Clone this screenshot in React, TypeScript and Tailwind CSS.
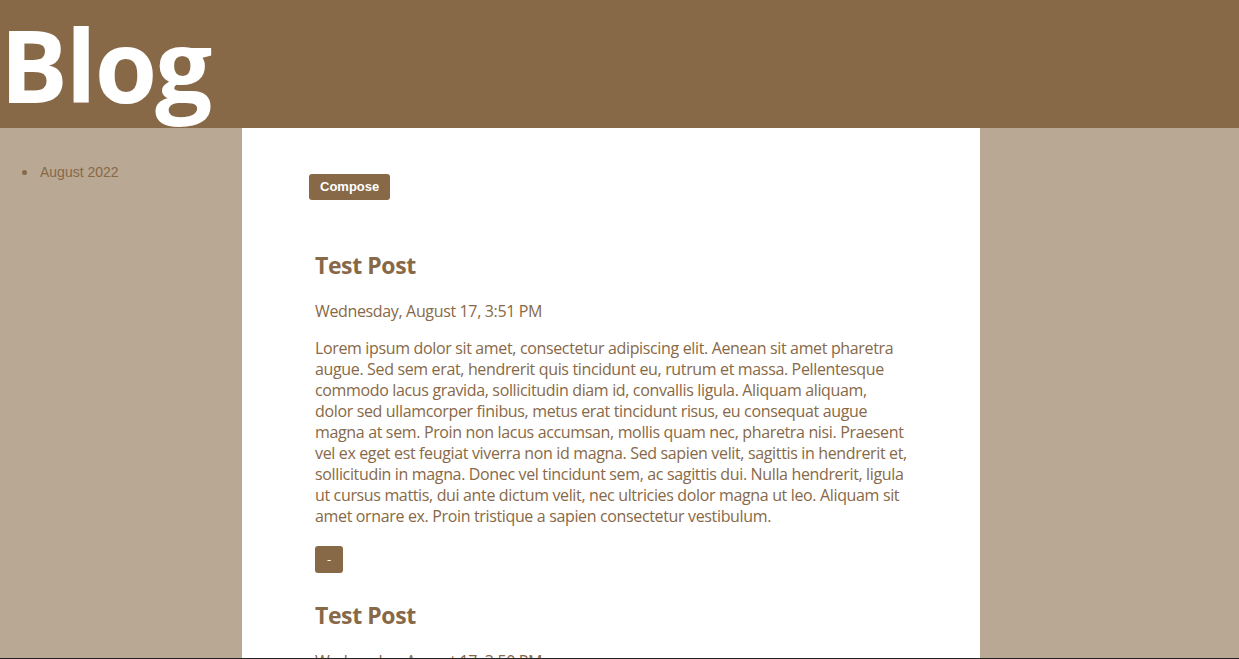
const lorem = [
  'Lorem ipsum dolor sit amet, consectetur adipiscing elit. Aenean sit amet pharetra',
  'augue. Sed sem erat, hendrerit quis tincidunt eu, rutrum et massa. Pellentesque',
  'commodo lacus gravida, sollicitudin diam id, convallis ligula. Aliquam aliquam,',
  'dolor sed ullamcorper finibus, metus erat tincidunt risus, eu consequat augue',
  'magna at sem. Proin non lacus accumsan, mollis quam nec, pharetra nisi. Praesent',
  'vel ex eget est feugiat viverra non id magna. Sed sapien velit, sagittis in hendrerit et,',
  'sollicitudin in magna. Donec vel tincidunt sem, ac sagittis dui. Nulla hendrerit, ligula',
  'ut cursus mattis, dui ante dictum velit, nec ultricies dolor magna ut leo. Aliquam sit',
  'amet ornare ex. Proin tristique a sapien consectetur vestibulum.',
]

const posts = [
  { id: 1, title: 'Test Post', date: 'Wednesday, August 17, 3:51 PM' },
  { id: 2, title: 'Test Post', date: 'Wednesday, August 17, 3:50 PM' },
]

function Post({ title, date }: { title: string; date: string }) {
  return (
    <article className="px-[6px] mb-[26px] text-[#876947]">
      <h2 className="text-[23px] leading-[32px] font-bold tracking-[-0.4px]">{title}</h2>
      <p className="mt-[20px] text-[16px] leading-[21px] tracking-[-0.35px]">{date}</p>
      <p className="mt-[16px] text-[16px] leading-[21px] tracking-[-0.35px] whitespace-nowrap">
        {lorem.map((line, i) => (
          <span key={i} className="block">
            {line}
          </span>
        ))}
      </p>
      <button className="mt-[19px] h-[27px] w-[28px] rounded-[3px] bg-[#876947] text-white text-[13px] leading-none">
        -
      </button>
    </article>
  )
}

export default function App() {
  return (
    <div className="h-[659px] overflow-hidden border-b border-[#222] bg-[#b9a893] font-['Open_Sans',sans-serif]">
      <header className="h-[128px] bg-[#876947] pt-[14px]">
        <h1 className="text-[101px] leading-none font-bold text-white tracking-[-2px]">Blog</h1>
      </header>
      <div className="flex h-[530px]">
        <aside className="w-[242px] shrink-0 pt-[34px] pl-[22px]">
          <ul className="font-['Liberation_Sans',Arial,sans-serif] text-[14px] text-[#876947]">
            <li className="flex items-center gap-[13px]">
              <span className="w-[5px] h-[5px] rounded-full bg-[#876947]" />
              August 2022
            </li>
          </ul>
        </aside>
        <main className="w-[738px] shrink-0 bg-white pl-[67px] pr-[70px] pt-[45px]">
          <button className="h-[26px] px-[11px] rounded-[3px] bg-[#876947] text-white text-[13px] font-bold font-['Liberation_Sans',Arial,sans-serif]">
            Compose
          </button>
          <div className="mt-[49px]">
            {posts.map(p => (
              <Post key={p.id} title={p.title} date={p.date} />
            ))}
          </div>
        </main>
        <div className="flex-1" />
      </div>
    </div>
  )
}
